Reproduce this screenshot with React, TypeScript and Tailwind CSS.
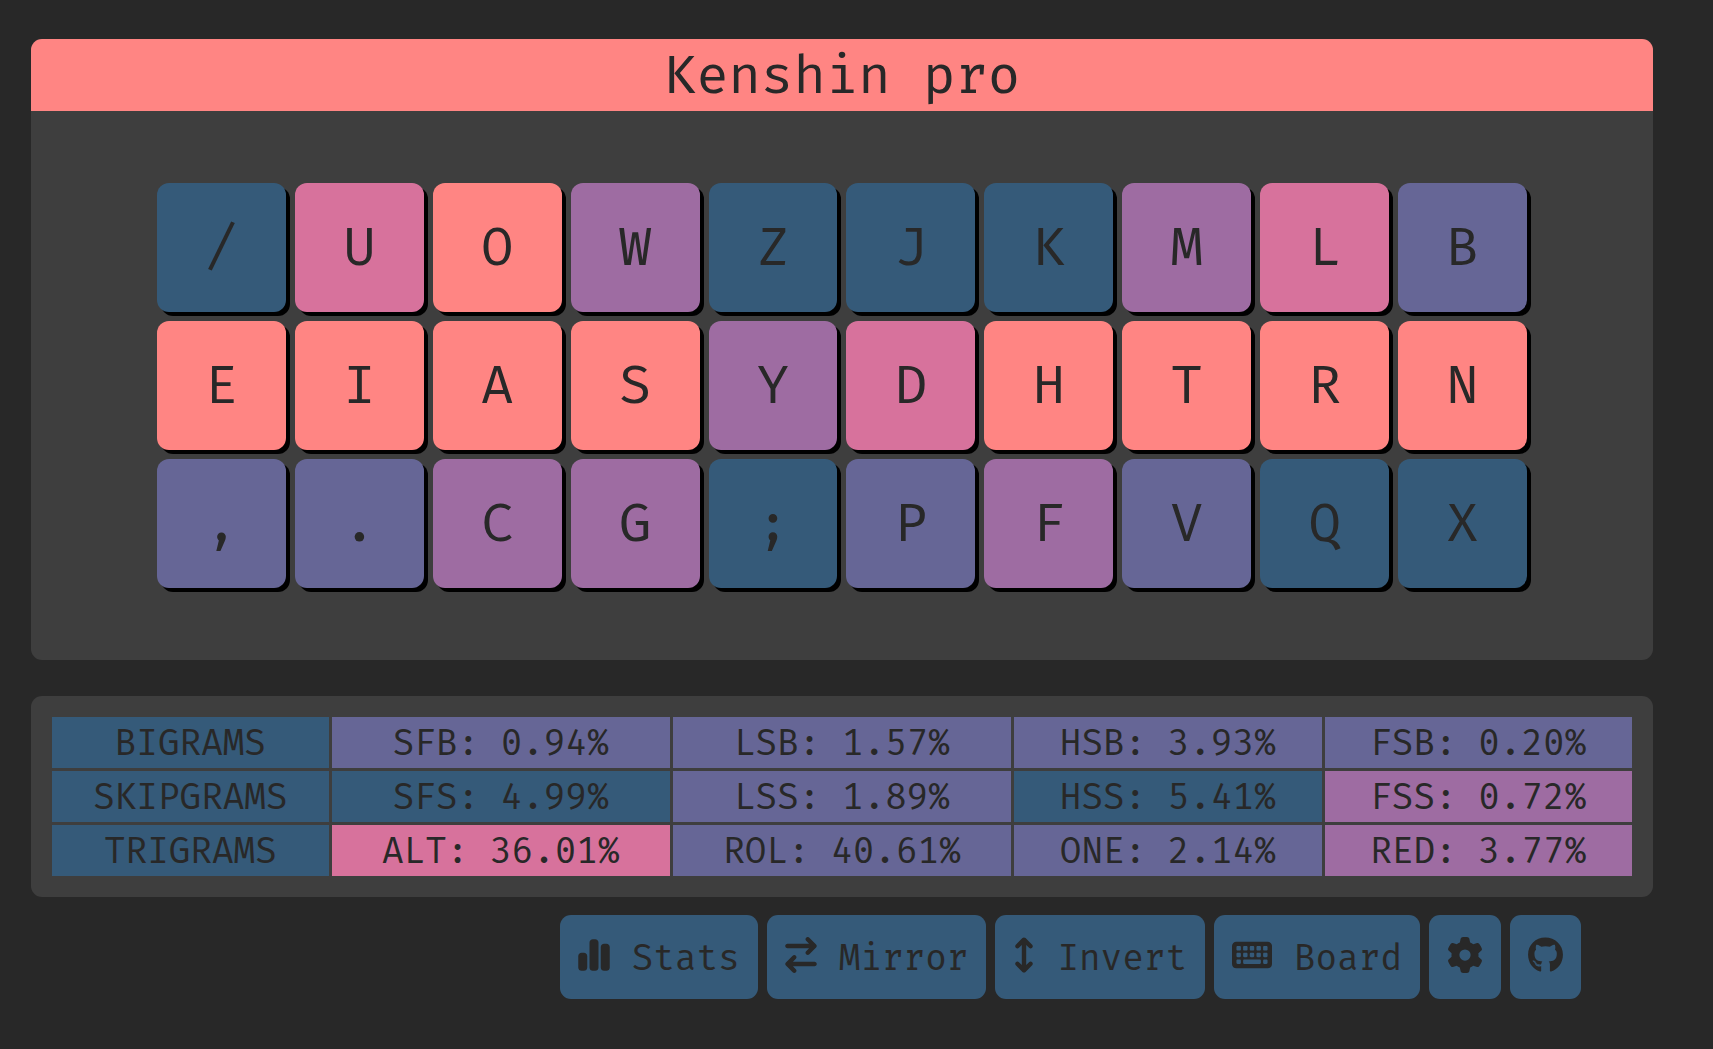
import React from "react";
import {
  FaArrowRightArrowLeft,
  FaArrowsUpDown,
  FaChartSimple,
  FaGear,
  FaGithub,
  FaKeyboard,
} from "react-icons/fa6";

const tone = {
  blue: "bg-[#355a79]",
  indigo: "bg-[#666696]",
  purple: "bg-[#9e6ca2]",
  pink: "bg-[#d7729c]",
  coral: "bg-[#ff8583]",
};

type Tone = keyof typeof tone;

const keys: [string, Tone][] = [
  ["/", "blue"], ["U", "pink"], ["O", "coral"], ["W", "purple"], ["Z", "blue"],
  ["J", "blue"], ["K", "blue"], ["M", "purple"], ["L", "pink"], ["B", "indigo"],
  ["E", "coral"], ["I", "coral"], ["A", "coral"], ["S", "coral"], ["Y", "purple"],
  ["D", "pink"], ["H", "coral"], ["T", "coral"], ["R", "coral"], ["N", "coral"],
  [",", "indigo"], [".", "indigo"], ["C", "purple"], ["G", "purple"], [";", "blue"],
  ["P", "indigo"], ["F", "purple"], ["V", "indigo"], ["Q", "blue"], ["X", "blue"],
];

const stats: { name: string; cells: [string, Tone][] }[] = [
  {
    name: "BIGRAMS",
    cells: [["SFB: 0.94%", "indigo"], ["LSB: 1.57%", "indigo"], ["HSB: 3.93%", "indigo"], ["FSB: 0.20%", "indigo"]],
  },
  {
    name: "SKIPGRAMS",
    cells: [["SFS: 4.99%", "blue"], ["LSS: 1.89%", "indigo"], ["HSS: 5.41%", "blue"], ["FSS: 0.72%", "purple"]],
  },
  {
    name: "TRIGRAMS",
    cells: [["ALT: 36.01%", "pink"], ["ROL: 40.61%", "indigo"], ["ONE: 2.14%", "indigo"], ["RED: 3.77%", "purple"]],
  },
];

const actionClass =
  "flex h-[84px] cursor-pointer items-center gap-[22px] rounded-[11px] bg-[#355a79] px-[18px] pt-[2px] text-[36px] leading-[48px]";

export default function App() {
  return (
    <div className="min-h-screen bg-[#282828] pt-[39px] pr-[60px] pb-[50px] pl-[31px] font-['Fira_Mono','Liberation_Mono',monospace] text-[#282828]">
      <main>
        <section className="overflow-hidden rounded-[11px] bg-[#3e3e3e]">
          <h1 className="bg-[#ff8583] text-center text-[54px] leading-[72px]">Kenshin pro</h1>
          <div className="mx-auto grid max-w-[1370px] grid-cols-10 gap-[9px] py-[72px]">
            {keys.map(([label, t]) => (
              <div
                key={label}
                className={`flex aspect-square items-center justify-center rounded-xl pb-px text-[54px] leading-[72px] shadow-[4px_4px_0_#000] ${tone[t]}`}
              >
                {label}
              </div>
            ))}
          </div>
        </section>

        <section className="mt-9 rounded-[11px] bg-[#3e3e3e] p-[18px]">
          <table className="w-full border-separate border-spacing-[3px] text-center text-[36px] leading-[49px]">
            <tbody>
              {stats.map((row) => (
                <tr key={row.name}>
                  <th scope="row" className="bg-[#355a79] p-0 pt-[2px] font-normal">
                    {row.name}
                  </th>
                  {row.cells.map(([text, t]) => (
                    <td key={text} className={`p-0 pt-[2px] ${tone[t]}`}>
                      {text}
                    </td>
                  ))}
                </tr>
              ))}
            </tbody>
          </table>
        </section>

        <nav className="mt-[18px] flex flex-wrap justify-end gap-[9px] pr-[72px]">
          <button type="button" className={actionClass}>
            <FaChartSimple className="mb-[5px] h-9 w-8 shrink-0" />
            Stats
          </button>
          <button type="button" className={actionClass}>
            <FaArrowRightArrowLeft className="mb-[5px] h-9 w-8 shrink-0" />
            Mirror
          </button>
          <button type="button" className={actionClass}>
            <FaArrowsUpDown className="mb-[5px] h-9 w-[22px] shrink-0" />
            Invert
          </button>
          <button type="button" className={actionClass}>
            <FaKeyboard className="mb-[5px] h-9 w-10 shrink-0" />
            Board
          </button>
          <button type="button" aria-label="Settings" className={actionClass}>
            <FaGear className="mb-[5px] h-9 w-9 shrink-0" />
          </button>
          <a href="#github" aria-label="GitHub" className={actionClass}>
            <FaGithub className="mb-[5px] h-9 w-[35px] shrink-0" />
          </a>
        </nav>
      </main>
    </div>
  );
}
